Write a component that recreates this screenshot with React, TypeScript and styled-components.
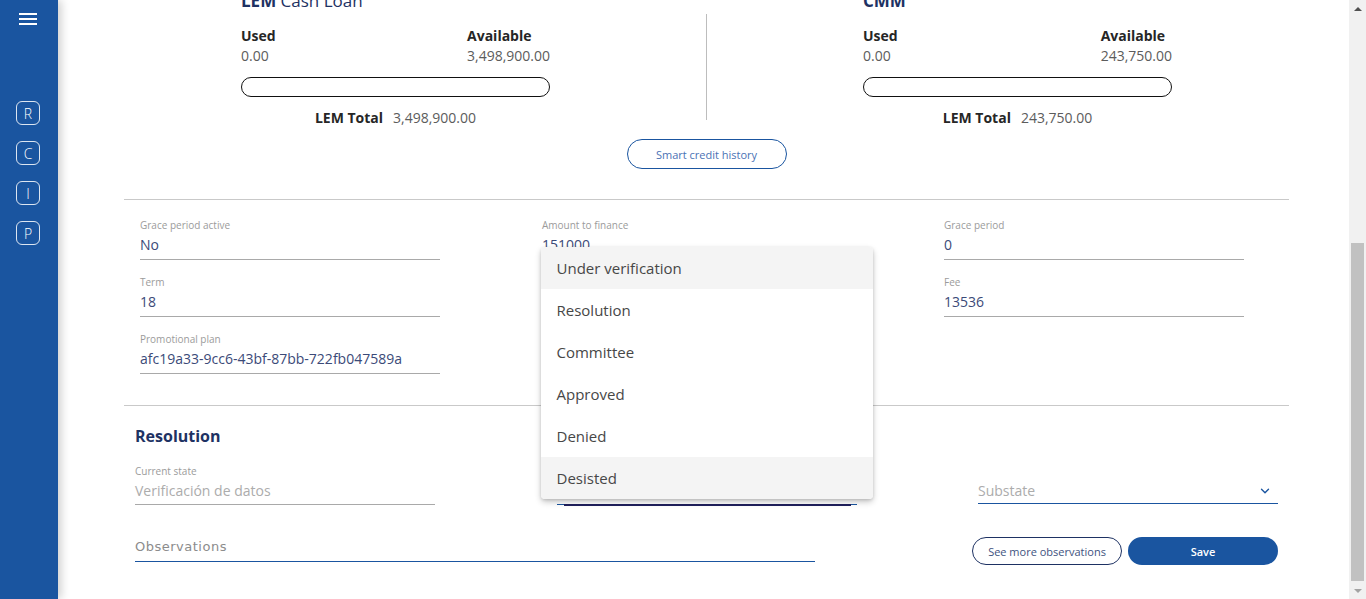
import { useLayoutEffect, useRef } from "react";
import styled, { createGlobalStyle } from "styled-components";
import { ChevronDown } from "lucide-react";

const GlobalStyle = createGlobalStyle`
  html, body {
    margin: 0;
    padding: 0;
    height: 100%;
    overflow: hidden;
  }
  body {
    font-family: "Open Sans", "Noto Sans", sans-serif;
    color: #1e3263;
    background: #fff;
  }
  #root {
    height: 100%;
  }
  * {
    box-sizing: border-box;
  }
`;

const Shell = styled.div`
  display: flex;
  height: 100vh;
`;

const Sidebar = styled.aside`
  width: 58px;
  flex-shrink: 0;
  background: #1a55a0;
  display: flex;
  flex-direction: column;
  align-items: center;
  padding-top: 13px;
  box-shadow: 3px 0 9px rgba(0, 0, 0, 0.2);
  z-index: 3;
`;

const Burger = styled.div`
  width: 18px;
  height: 12px;
  display: flex;
  flex-direction: column;
  justify-content: space-between;
  margin-bottom: 76px;
  margin-left: -2px;

  span {
    display: block;
    height: 2px;
    background: #fff;
  }
`;

const SideNav = styled.nav`
  display: flex;
  flex-direction: column;
  gap: 16px;
  margin-left: -2px;
`;

const SideButton = styled.div`
  width: 24px;
  height: 24px;
  border: 1.5px solid rgba(255, 255, 255, 0.85);
  border-radius: 6px;
  color: #fff;
  font-size: 14px;
  font-weight: 300;
  display: flex;
  align-items: center;
  justify-content: center;
`;

const Main = styled.main`
  flex: 1;
  overflow-y: scroll;
  scrollbar-width: none;
  position: relative;

  &::-webkit-scrollbar {
    display: none;
  }
`;

const ScrollTrack = styled.div`
  width: 17px;
  flex-shrink: 0;
  background: #f1f1f1;
  display: flex;
  flex-direction: column;
`;

const ScrollArrow = styled.div<{ $down?: boolean }>`
  height: 17px;
  display: flex;
  align-items: center;
  justify-content: center;

  &::before {
    content: "";
    border-left: 4px solid transparent;
    border-right: 4px solid transparent;
    ${(p) =>
      p.$down ? "border-top: 4px solid #a3a3a3;" : "border-bottom: 4px solid #505050;"}
  }
`;

const ScrollSpace = styled.div`
  flex: 1;
`;

const ScrollThumb = styled.div`
  height: 338px;
  margin: 0 2px 1px;
  background: #c1c1c1;
`;

const Content = styled.div`
  padding: 24px 60px 34px 66px;
`;

const Summary = styled.section`
  height: 369px;
  display: flex;
  flex-direction: column;
  gap: 18px;
  padding: 0 16px;
`;

const PageTitle = styled.h1`
  margin: 0;
  font-size: 22px;
  font-weight: 700;
  color: #1e3263;
`;

const CreditRow = styled.section`
  display: flex;
  justify-content: center;
  gap: 156px;
`;

const CreditBlock = styled.div`
  width: 309px;
  display: flex;
  flex-direction: column;
`;

const CreditTitle = styled.h3`
  margin: 0 0 16px;
  font-size: 17px;
  line-height: 20px;
  font-weight: 400;
  color: #1e3263;

  b {
    font-weight: 700;
  }
`;

const StatsRow = styled.div`
  display: flex;
  justify-content: space-between;
`;

const Stat = styled.div`
  display: flex;
  flex-direction: column;
  gap: 2px;
`;

const StatLabel = styled.span`
  font-size: 14px;
  line-height: 18px;
  font-weight: 700;
  color: #262626;
`;

const StatValue = styled.span`
  font-size: 14px;
  line-height: 18px;
  color: #5c5c5c;
`;

const Bar = styled.div`
  margin-top: 12px;
  height: 20px;
  border: 1px solid #111;
  border-radius: 10px;
`;

const TotalRow = styled.div`
  margin-top: 12px;
  display: flex;
  justify-content: center;
  gap: 10px;
  font-size: 14px;
  line-height: 18px;
  color: #5c5c5c;

  b {
    color: #262626;
    font-weight: 700;
  }
`;

const VDivider = styled.div`
  width: 1px;
  background: #bdbdbd;
  margin: 23px 0 7px;
`;

const Centered = styled.div`
  display: flex;
  justify-content: center;
  margin-top: 12px;
`;

const OutlineButton = styled.button<{ $width: number; $height: number }>`
  width: ${(p) => p.$width}px;
  height: ${(p) => p.$height}px;
  border-radius: ${(p) => p.$height / 2}px;
  border: 1px solid #1e3263;
  background: #fff;
  color: #3e5280;
  font-family: inherit;
  font-size: 11px;
  padding: 0;
`;

const HistoryButton = styled(OutlineButton)`
  border-color: #1a55a0;
  color: #4a72b5;
`;

const SaveButton = styled.button`
  width: 150px;
  height: 28px;
  border-radius: 14px;
  border: none;
  background: #1a55a0;
  color: #fff;
  font-family: inherit;
  font-size: 11px;
  font-weight: 600;
`;

const Section = styled.section<{ $pad: number; $gap?: number }>`
  border-top: 1px solid #c9c9c9;
  padding: 0 ${(p) => p.$pad}px;
  margin-top: ${(p) => p.$gap ?? 0}px;
`;

const FormGrid = styled.div`
  display: grid;
  grid-template-columns: repeat(3, 300px);
  column-gap: 102px;
  align-items: start;
  padding: 18px 0 31px;
`;

const FieldColumn = styled.div`
  display: flex;
  flex-direction: column;
  gap: 15px;
`;

const Field = styled.div`
  display: flex;
  flex-direction: column;
  position: relative;
`;

const FieldLabel = styled.span`
  font-size: 10px;
  line-height: 14px;
  color: #9b9b9b;
  margin-bottom: 4px;
`;

const FieldValue = styled.div<{ $muted?: boolean; $line?: string; $pb?: number }>`
  font-size: 14px;
  line-height: 18px;
  color: ${(p) => (p.$muted ? "#acacac" : "#3b4a78")};
  padding-bottom: ${(p) => p.$pb ?? 5}px;
  border-bottom: 1px solid ${(p) => p.$line ?? "#a9a9a9"};
  display: flex;
  align-items: center;
  justify-content: space-between;
  position: relative;

  svg {
    margin-right: 6px;
  }
`;

const FocusLine = styled.div`
  position: absolute;
  left: 7px;
  right: 6px;
  bottom: -2px;
  height: 2px;
  background: #1f1f5c;
`;

const SectionTitle = styled.h2`
  margin: 0;
  padding-top: 20px;
  font-size: 16px;
  line-height: 20px;
  font-weight: 700;
  color: #1e3263;
`;

const ResolutionGrid = styled.div`
  display: grid;
  grid-template-columns: repeat(3, 300px);
  justify-content: space-between;
  margin-top: 18px;
`;

const ActionsRow = styled.div`
  display: flex;
  align-items: flex-start;
  justify-content: space-between;
  margin-top: 32px;
`;

const Observations = styled.div`
  width: 680px;
  margin-top: 1px;
  font-family: "DejaVu Sans", sans-serif;
  font-size: 13px;
  letter-spacing: 0.5px;
  line-height: 18px;
  color: #8c8c8c;
  padding-bottom: 5px;
  border-bottom: 1px solid #1a55a0;
`;

const Buttons = styled.div`
  display: flex;
  gap: 6px;
`;

const Menu = styled.ul`
  position: absolute;
  left: -16px;
  bottom: 6px;
  width: 332px;
  margin: 0;
  padding: 0;
  list-style: none;
  background: #fff;
  border-radius: 4px;
  box-shadow: 0 3px 6px rgba(0, 0, 0, 0.22), 0 1px 3px rgba(0, 0, 0, 0.12);
  overflow: hidden;
  z-index: 10;
`;

const MenuItem = styled.li<{ $active?: boolean }>`
  height: 42px;
  display: flex;
  align-items: center;
  padding: 0 16px;
  font-size: 15px;
  color: #474747;
  background: ${(p) => (p.$active ? "#f4f4f4" : "#fff")};
`;

const credits = [
  { strong: "LEM", rest: " Cash Loan", used: "0.00", available: "3,498,900.00", total: "3,498,900.00" },
  { strong: "CMM", rest: "", used: "0.00", available: "243,750.00", total: "243,750.00" },
];

const formColumns = [
  [
    { label: "Grace period active", value: "No" },
    { label: "Term", value: "18" },
    { label: "Promotional plan", value: "afc19a33-9cc6-43bf-87bb-722fb047589a" },
  ],
  [{ label: "Amount to finance", value: "151000" }],
  [
    { label: "Grace period", value: "0" },
    { label: "Fee", value: "13536" },
  ],
];

const states = ["Under verification", "Resolution", "Committee", "Approved", "Denied", "Desisted"];

const CreditCard = ({ c }: { c: (typeof credits)[number] }) => (
  <CreditBlock>
    <CreditTitle>
      <b>{c.strong}</b>
      {c.rest}
    </CreditTitle>
    <StatsRow>
      <Stat>
        <StatLabel>Used</StatLabel>
        <StatValue>{c.used}</StatValue>
      </Stat>
      <Stat>
        <StatLabel>Available</StatLabel>
        <StatValue>{c.available}</StatValue>
      </Stat>
    </StatsRow>
    <Bar />
    <TotalRow>
      <b>LEM Total</b>
      <span>{c.total}</span>
    </TotalRow>
  </CreditBlock>
);

const App = () => {
  const mainRef = useRef<HTMLElement>(null);

  useLayoutEffect(() => {
    if (mainRef.current) mainRef.current.scrollTop = mainRef.current.scrollHeight;
  }, []);

  return (
    <>
      <GlobalStyle />
      <Shell>
        <Sidebar>
          <Burger>
            <span />
            <span />
            <span />
          </Burger>
          <SideNav>
            {["R", "C", "I", "P"].map((l) => (
              <SideButton key={l}>{l}</SideButton>
            ))}
          </SideNav>
        </Sidebar>
        <Main ref={mainRef}>
          <Content>
            <Summary>
              <PageTitle>Credit request</PageTitle>
            </Summary>
            <CreditRow>
              <CreditCard c={credits[0]} />
              <VDivider />
              <CreditCard c={credits[1]} />
            </CreditRow>
            <Centered>
              <HistoryButton $width={160} $height={30}>
                Smart credit history
              </HistoryButton>
            </Centered>
            <Section $pad={16} $gap={30}>
              <FormGrid>
                {formColumns.map((col, i) => (
                  <FieldColumn key={i}>
                    {col.map((f) => (
                      <Field key={f.label}>
                        <FieldLabel>{f.label}</FieldLabel>
                        <FieldValue>{f.value}</FieldValue>
                      </Field>
                    ))}
                  </FieldColumn>
                ))}
              </FormGrid>
            </Section>
            <Section $pad={11}>
              <SectionTitle>Resolution</SectionTitle>
              <ResolutionGrid>
                <Field>
                  <FieldLabel>Current state</FieldLabel>
                  <FieldValue $muted $pb={4}>
                    Verificación de datos
                  </FieldValue>
                </Field>
                <Field>
                  <FieldLabel>&nbsp;</FieldLabel>
                  <FieldValue $line="#1a55a0" $pb={4}>
                    &nbsp;
                    <FocusLine />
                  </FieldValue>
                  <Menu>
                    {states.map((s, i) => (
                      <MenuItem key={s} $active={i === 0 || i === states.length - 1}>
                        {s}
                      </MenuItem>
                    ))}
                  </Menu>
                </Field>
                <Field>
                  <FieldLabel>&nbsp;</FieldLabel>
                  <FieldValue $muted $line="#1a55a0" $pb={3}>
                    Substate
                    <ChevronDown size={14} color="#1a55a0" strokeWidth={2.4} />
                  </FieldValue>
                </Field>
              </ResolutionGrid>
              <ActionsRow>
                <Observations>Observations</Observations>
                <Buttons>
                  <OutlineButton $width={150} $height={28}>
                    See more observations
                  </OutlineButton>
                  <SaveButton>Save</SaveButton>
                </Buttons>
              </ActionsRow>
            </Section>
          </Content>
        </Main>
        <ScrollTrack>
          <ScrollArrow />
          <ScrollSpace />
          <ScrollThumb />
          <ScrollArrow $down />
        </ScrollTrack>
      </Shell>
    </>
  );
};

export default App;
